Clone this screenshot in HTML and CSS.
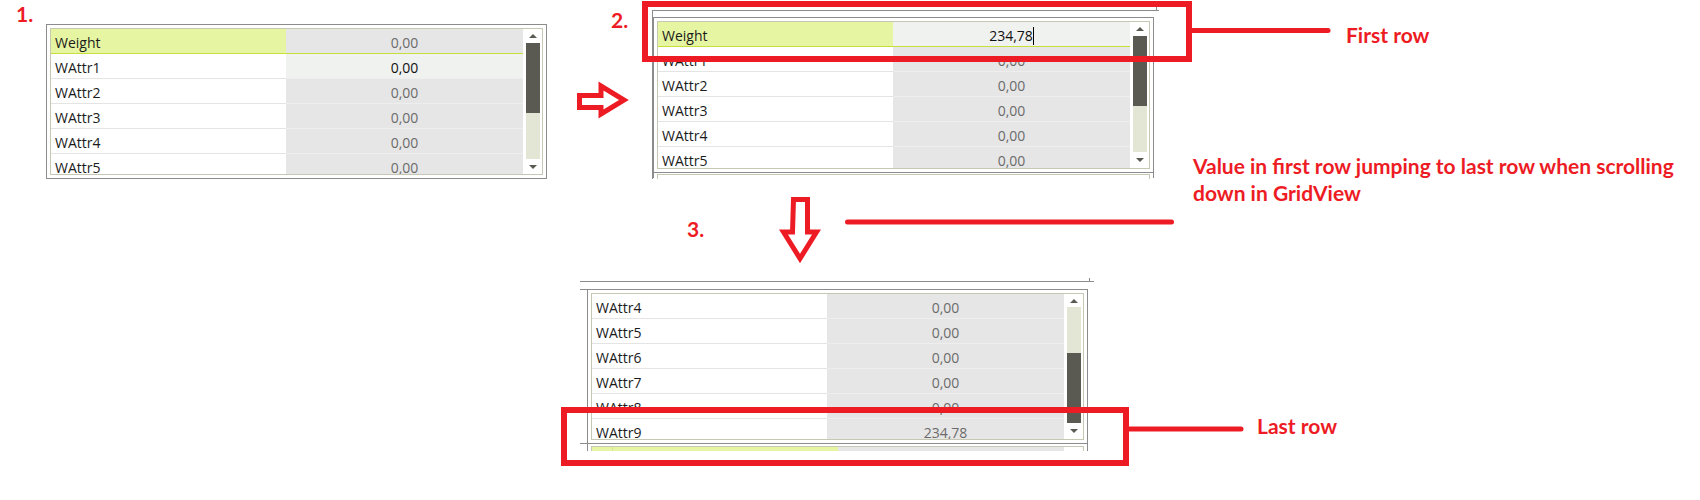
FILE: index.html
```html
<!DOCTYPE html>
<html lang="en">
<head>
<meta charset="UTF-8" />
<title>GridView scrolling issue</title>
<link rel="stylesheet" href="styles.css">
</head>
<body>
<div class="canvas">

  <!-- step 1 -->
  <div class="step s1">1.</div>
  <div class="grid g1">
    <div class="grid-inner">
      <div class="rows">
        <div class="row current"><div class="name">Weight</div><div class="val">0,00</div></div>
        <div class="row focus"><div class="name">WAttr1</div><div class="val">0,00</div></div>
        <div class="row"><div class="name">WAttr2</div><div class="val">0,00</div></div>
        <div class="row"><div class="name">WAttr3</div><div class="val">0,00</div></div>
        <div class="row"><div class="name">WAttr4</div><div class="val">0,00</div></div>
        <div class="row"><div class="name">WAttr5</div><div class="val">0,00</div></div>
      </div>
      <div class="scroll">
        <div class="btn up"><span class="tri-up"></span></div>
        <div class="track"><div class="thumb"></div></div>
        <div class="btn down"><span class="tri-down"></span></div>
      </div>
    </div>
  </div>

  <!-- step 2 -->
  <div class="step s2">2.</div>
  <div class="shell2"></div>
  <div class="tick2"></div>
  <div class="grid g2">
    <div class="grid-inner">
      <div class="rows">
        <div class="row current editing"><div class="name">Weight</div><div class="val">234,78<span class="caret"></span></div></div>
        <div class="row"><div class="name">WAttr1</div><div class="val">0,00</div></div>
        <div class="row"><div class="name">WAttr2</div><div class="val">0,00</div></div>
        <div class="row"><div class="name">WAttr3</div><div class="val">0,00</div></div>
        <div class="row"><div class="name">WAttr4</div><div class="val">0,00</div></div>
        <div class="row"><div class="name">WAttr5</div><div class="val">0,00</div></div>
      </div>
      <div class="scroll">
        <div class="btn up"><span class="tri-up"></span></div>
        <div class="track"><div class="thumb"></div></div>
        <div class="btn down"><span class="tri-down"></span></div>
      </div>
    </div>
  </div>
  <div class="stub2"></div>

  <!-- step 3 -->
  <div class="step s3">3.</div>
  <div class="topline3"></div>
  <div class="tick3"></div>
  <div class="ext3 a"></div>
  <div class="ext3 b"></div>
  <div class="grid g3">
    <div class="grid-inner">
      <div class="rows">
        <div class="row"><div class="name">WAttr4</div><div class="val">0,00</div></div>
        <div class="row"><div class="name">WAttr5</div><div class="val">0,00</div></div>
        <div class="row"><div class="name">WAttr6</div><div class="val">0,00</div></div>
        <div class="row"><div class="name">WAttr7</div><div class="val">0,00</div></div>
        <div class="row"><div class="name">WAttr8</div><div class="val">0,00</div></div>
        <div class="row"><div class="name">WAttr9</div><div class="val">234,78</div></div>
      </div>
      <div class="scroll">
        <div class="btn up"><span class="tri-up"></span></div>
        <div class="track"><div class="thumb"></div></div>
        <div class="btn down"><span class="tri-down"></span></div>
      </div>
    </div>
  </div>
  <div class="stub3">
    <div class="stub3-inner">
      <div class="stub-name"></div>
      <div class="stub-val"></div>
    </div>
  </div>

  <!-- annotations -->
  <svg class="marks" width="1700" height="500" viewBox="0 0 1700 500">
    <polygon class="arrow" points="579.5,95.5 601,95.5 601,86 624,100 601,114 601,107.5 579.5,107.5" />
    <polygon class="arrow" points="793.5,199.5 807.5,199.5 807.5,232 816.5,232 800,258.5 783.5,232 792.5,232" />
    <line class="lead" x1="1191" y1="30.5" x2="1328" y2="30.5" />
    <line class="lead" x1="847.5" y1="222" x2="1171.5" y2="222" />
    <line class="lead" x1="1128" y1="429" x2="1241" y2="429" />
  </svg>
  <div class="box box-first"></div>
  <div class="box box-last"></div>

  <div class="note n-first">First row</div>
  <div class="note n-jump">Value in first row jumping to last row when scrolling<br>down in GridView</div>
  <div class="note n-last">Last row</div>

</div>
</body>
</html>
```

FILE: styles.css
```css
body {
  margin: 0;
  background-color: white;
}

.canvas {
  position: relative;
  width: 1700px;
  height: 500px;
  overflow: hidden;
  background-color: white;
  font-family: "Open Sans", "Noto Sans", sans-serif;
}

/* red annotation text */
.step, .note {
  position: absolute;
  font-family: Lato, "Liberation Sans", sans-serif;
  font-weight: bold;
  font-size: 21px;
  line-height: 21px;
  color: #ed1c24;
  white-space: nowrap;
}

.s1 { left: 16px; top: 3px; }
.s2 { left: 611px; top: 9px; }
.s3 { left: 687px; top: 218px; }

.n-first { left: 1346px; top: 24px; }
.n-last { left: 1257px; top: 415px; }
.n-jump { left: 1193px; top: 152px; line-height: 27px; }

.marks {
  position: absolute;
  left: 0;
  top: 0;
}

.arrow {
  fill: white;
  stroke: #ed1c24;
  stroke-width: 5;
}

.lead {
  stroke: #ed1c24;
  stroke-width: 5;
  stroke-linecap: round;
}

.box {
  position: absolute;
  border: 6px solid #ed1c24;
  box-sizing: border-box;
}

.box-first { left: 642px; top: 1px; width: 550px; height: 61px; }
.box-last { left: 561px; top: 407px; width: 568px; height: 59px; }

/* grid control */
.grid {
  position: absolute;
  width: 501px;
  border: 1px solid #8c8c8c;
  padding: 3px;
  box-sizing: border-box;
  background-color: white;
}

.g1 { left: 46px; top: 24px; }
.g2 { left: 653px; top: 17px; }
.g3 { left: 587px; top: 289px; }

.grid-inner {
  display: flex;
  height: 145px;
  border: 1px solid #c6c8b4;
  overflow: hidden;
}

.g2 .grid-inner { height: 146px; }

.rows {
  width: 472px;
}

.row {
  display: flex;
  height: 25px;
  font-size: 14px;
}

.name, .val {
  height: 25px;
  padding-top: 3px;
  line-height: 21px;
  box-sizing: border-box;
}

.name {
  width: 235px;
  padding-left: 4px;
  color: #1b1b1b;
  background-color: white;
  border-bottom: 1px solid #e4e4e4;
}

.val {
  width: 237px;
  text-align: center;
  color: #6b6b6b;
  background-color: #e6e6e6;
  border-bottom: 1px solid #eeeeee;
}

.row.current .name {
  background-color: #e6f5a2;
}

.row.current .name, .row.current .val {
  border-bottom: 1px solid #c6df3c;
}

.row.focus .val, .row.editing .val {
  background-color: #f0f2ef;
  color: #111;
}

.caret {
  display: inline-block;
  width: 1px;
  height: 18px;
  background-color: #000;
  vertical-align: -4px;
}

/* scrollbar */
.scroll {
  width: 19px;
  padding: 0 2px 0 3px;
  box-sizing: border-box;
  display: flex;
  flex-direction: column;
  background-color: white;
}

.btn {
  display: flex;
  justify-content: center;
  align-items: center;
  height: 14px;
}

.btn.down {
  flex: 1;
}

.g3 .btn.up { height: 13px; }

.track {
  height: 116px;
  background-color: #e3e5d5;
}

.thumb {
  height: 70px;
  background-color: #5a5a53;
}

.g3 .thumb {
  margin-top: 46px;
}

.tri-up, .tri-down {
  width: 0;
  height: 0;
  border-left: 4px solid transparent;
  border-right: 4px solid transparent;
}

.tri-up { border-bottom: 4px solid #5a5a53; }
.tri-down { border-top: 4px solid #5a5a53; }

/* extra frame lines around grids 2 and 3 */
.shell2 {
  position: absolute;
  left: 652px;
  top: 10px;
  width: 506px;
  height: 168px;
  border-top: 1px solid #8c8c8c;
  border-left: 1px solid #8c8c8c;
}

.tick2 {
  position: absolute;
  left: 1156px;
  top: 7px;
  width: 1px;
  height: 4px;
  background-color: #8c8c8c;
}

.stub2 {
  position: absolute;
  left: 653px;
  top: 172px;
  width: 501px;
  height: 6px;
  border-left: 1px solid #8c8c8c;
  border-right: 1px solid #8c8c8c;
  padding: 2px 3px 0;
  box-sizing: border-box;
}

.stub2::after {
  content: "";
  display: block;
  height: 4px;
  border-top: 1px solid #c6c8b4;
  border-left: 1px solid #c6c8b4;
  border-right: 1px solid #c6c8b4;
}

.topline3 {
  position: absolute;
  left: 580px;
  top: 281px;
  width: 514px;
  height: 1px;
  background-color: #8c8c8c;
}

.tick3 {
  position: absolute;
  left: 1089px;
  top: 278px;
  width: 1px;
  height: 4px;
  background-color: #8c8c8c;
}

.ext3 {
  position: absolute;
  left: 580px;
  width: 7px;
  height: 1px;
  background-color: #8c8c8c;
}

.ext3.a { top: 289px; }
.ext3.b { top: 443px; }

.stub3 {
  position: absolute;
  left: 587px;
  top: 444px;
  width: 501px;
  height: 7px;
  border-left: 1px solid #8c8c8c;
  border-right: 1px solid #8c8c8c;
  padding: 2px 3px 0;
  box-sizing: border-box;
  overflow: hidden;
}

.stub3-inner {
  display: flex;
  height: 10px;
  border-top: 1px solid #c6c8b4;
  border-left: 1px solid #c6c8b4;
  border-right: 1px solid #c6c8b4;
}

.stub-name {
  width: 246px;
  background-color: #e6f5a2;
  box-shadow: inset 20px 0 0 #e6f5a2, inset 21px 0 0 #d3e68f;
}

.stub-val {
  width: 226px;
  background-color: #e6e6e6;
}
```
